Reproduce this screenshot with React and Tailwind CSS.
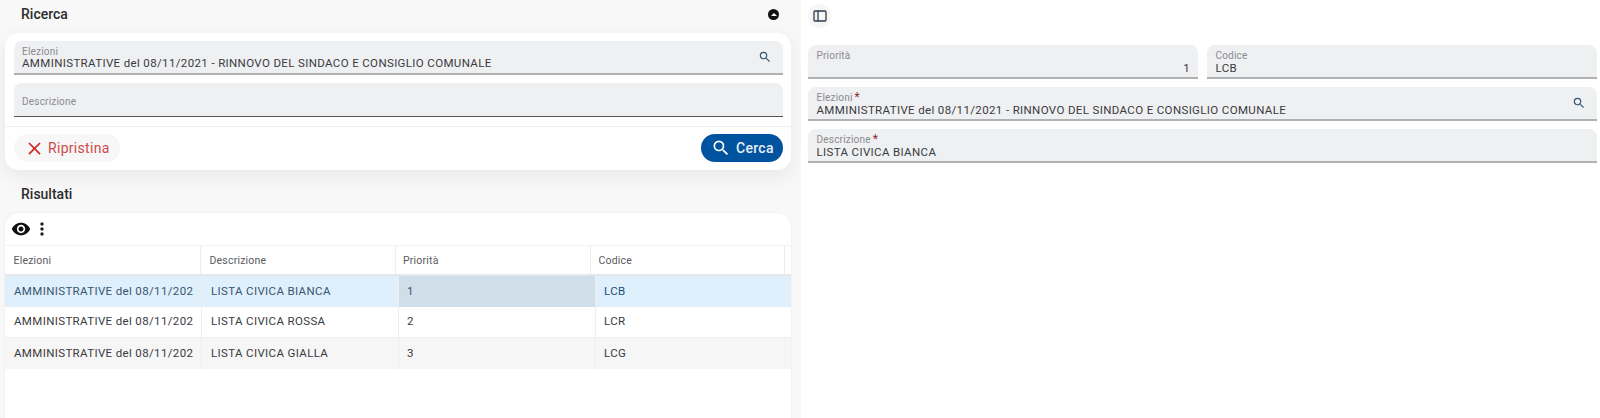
import React from 'react';
import { MdSearch, MdClose, MdVisibility, MdMoreVert } from 'react-icons/md';

const rows = [
  { desc: 'LISTA CIVICA BIANCA', pri: '1', code: 'LCB', selected: true },
  { desc: 'LISTA CIVICA ROSSA', pri: '2', code: 'LCR' },
  { desc: 'LISTA CIVICA GIALLA', pri: '3', code: 'LCG', odd: true },
];

const headers = [
  { label: 'Elezioni', pad: 'pl-[8.5px]' },
  { label: 'Descrizione', pad: 'pl-[8.5px]' },
  { label: 'Priorità', pad: 'pl-[7px]' },
  { label: 'Codice', pad: 'pl-[7.5px]' },
  { label: '', pad: '' },
];

const Field = ({ label, value, required, search, right, tight }) => (
  <div className={`relative h-[34px] rounded-t-[8px] bg-[#eff0f2] pr-2 border-b-2 border-b-[#b0b1b3] ${tight ? 'pl-2' : 'pl-[8.5px]'}`}>
    <div className="pt-1 h-[15px] text-[10px] leading-[14px] tracking-[0.2px] text-[#8b8b8f] flex">
      {label}
      {required && <span className="ml-[2px] text-[#8c2f39] text-[12px] leading-[12px]">*</span>}
    </div>
    <div className={`text-[11.5px] leading-[14px] tracking-[0.36px] text-[#3a3a3d] ${tight ? '' : 'mt-px'} ${right ? 'text-right' : ''}`}>{value}</div>
    {search && <MdSearch className="absolute right-[11px] top-[9px] text-[#35577a]" size={14} />}
  </div>
);

const App = () => {
  return (
    <div className="flex w-[1600px] h-[418px] overflow-hidden bg-[#f8f8f8] font-['Roboto',sans-serif]">
      {/* Left side: search and results */}
      <div className="w-[801px] shrink-0 pl-[5px] pr-[10px]">
        <div className="h-[33px] flex items-center justify-between pl-4 pr-3 pb-[5px]">
          <h2 className="text-[14px] font-medium text-[#2c2c2c]">Ricerca</h2>
          <div className="w-[11px] h-[11px] rounded-full bg-[#111] flex items-center justify-center">
            <div className="w-0 h-0 border-x-[3.5px] border-x-transparent border-b-[3.5px] border-b-white" />
          </div>
        </div>

        <div className="bg-white rounded-[14px] shadow-[0_6px_20px_rgba(0,0,0,0.07)]">
          <div className="pl-[9px] pr-2 pt-2 pb-[9px] flex flex-col gap-2">
            <Field label="Elezioni" value="AMMINISTRATIVE del 08/11/2021 - RINNOVO DEL SINDACO E CONSIGLIO COMUNALE" search tight />
            <div className="h-[34px] rounded-t-[8px] bg-[#eff0f2] pl-2 pr-2 pt-[3px] border-b border-b-[#555] flex items-center text-[10px] tracking-[0.2px] text-[#8b8b8f]">
              Descrizione
            </div>
          </div>
          <div className="h-[44px] border-t border-t-[#f0f0f0] pl-[9px] pr-2 pt-[7px] flex justify-between">
            <button className="h-[28px] w-[106px] rounded-full bg-[#f7f7f7] flex items-center pl-[10px] gap-[3px] text-[14px] tracking-[0.3px] text-[#cd4a4a]">
              <MdClose size={21} className="text-[#d12c2c]" />
              Ripristina
            </button>
            <button className="h-[28px] w-[82px] rounded-full bg-[#00539f] flex items-center pl-[10px] gap-[5px] text-[14px] font-medium tracking-[0.3px] text-[#e8eef5]">
              <MdSearch size={20} className="text-white" />
              Cerca
            </button>
          </div>
        </div>

        <div className="h-[43px] flex items-center pl-4 pt-[5px]">
          <h2 className="text-[14px] font-medium text-[#2c2c2c]">Risultati</h2>
        </div>

        <div className="bg-white rounded-t-[14px] h-[205px] shadow-[0_0_2px_rgba(0,0,0,0.08)]">
          <div className="h-[33px] flex items-center pl-[6px] gap-px border-b border-b-[#f2f2f2]">
            <MdVisibility size={20} className="text-[#111]" />
            <MdMoreVert size={20} className="text-[#222]" />
          </div>
          <div className="h-[30px] grid grid-cols-[196px_195px_195px_194px_6px] border-b-2 border-b-[#e6e8eb] text-[10.5px] tracking-[0.2px] text-[#5a5a5e]">
            {headers.map((h) => (
              <div key={h.label} className={`flex items-center pt-px border-r border-r-[#eeeeee] last:border-r-0 ${h.pad}`}>{h.label}</div>
            ))}
          </div>
          {rows.map((r) => (
            <div
              key={r.code}
              className={`h-[31px] grid grid-cols-[197px_197px_197px_1fr] text-[11.5px] tracking-[0.36px] ${
                r.selected
                  ? 'bg-[#e0effc] text-[#37566f]'
                  : r.odd
                  ? 'bg-[#f6f6f6] text-[#3a3a3d]'
                  : 'bg-white text-[#3a3a3d] border-b border-b-[#eeeeee]'
              }`}
            >
              <div className="flex items-center pl-[9px] whitespace-nowrap border-r border-r-[#eeeeee]">AMMINISTRATIVE del 08/11/202</div>
              <div className="flex items-center pl-[9px] border-r border-r-[#eeeeee]">{r.desc}</div>
              <div className={`flex items-center pl-2 border-r border-r-[#eeeeee] ${r.selected ? 'bg-[#d0dee9]' : ''}`}>{r.pri}</div>
              <div className={`flex items-center pl-2 ${r.selected ? 'text-[#1c4f7a]' : ''}`}>{r.code}</div>
            </div>
          ))}
        </div>
      </div>

      {/* Right side: detail form */}
      <div className="flex-1 bg-white pl-[7px] pr-[3px]">
        <div className="h-[45px] pt-1">
          <button className="w-[23px] h-[24px] rounded-full bg-[#f6f6f6] flex items-center justify-center">
            <svg width="14" height="12" viewBox="0 0 14 12" fill="none" stroke="#2f3e4e" strokeWidth="1.3">
              <rect x="1" y="1" width="12" height="10" rx="1" />
              <path d="M5 1v10" />
            </svg>
          </button>
        </div>
        <div className="flex flex-col gap-2">
          <div className="grid grid-cols-2 gap-[9px]">
            <Field label="Priorità" value="1" right />
            <Field label="Codice" value="LCB" />
          </div>
          <Field label="Elezioni" value="AMMINISTRATIVE del 08/11/2021 - RINNOVO DEL SINDACO E CONSIGLIO COMUNALE" required search />
          <Field label="Descrizione" value="LISTA CIVICA BIANCA" required />
        </div>
      </div>
    </div>
  );
};

export default App;
